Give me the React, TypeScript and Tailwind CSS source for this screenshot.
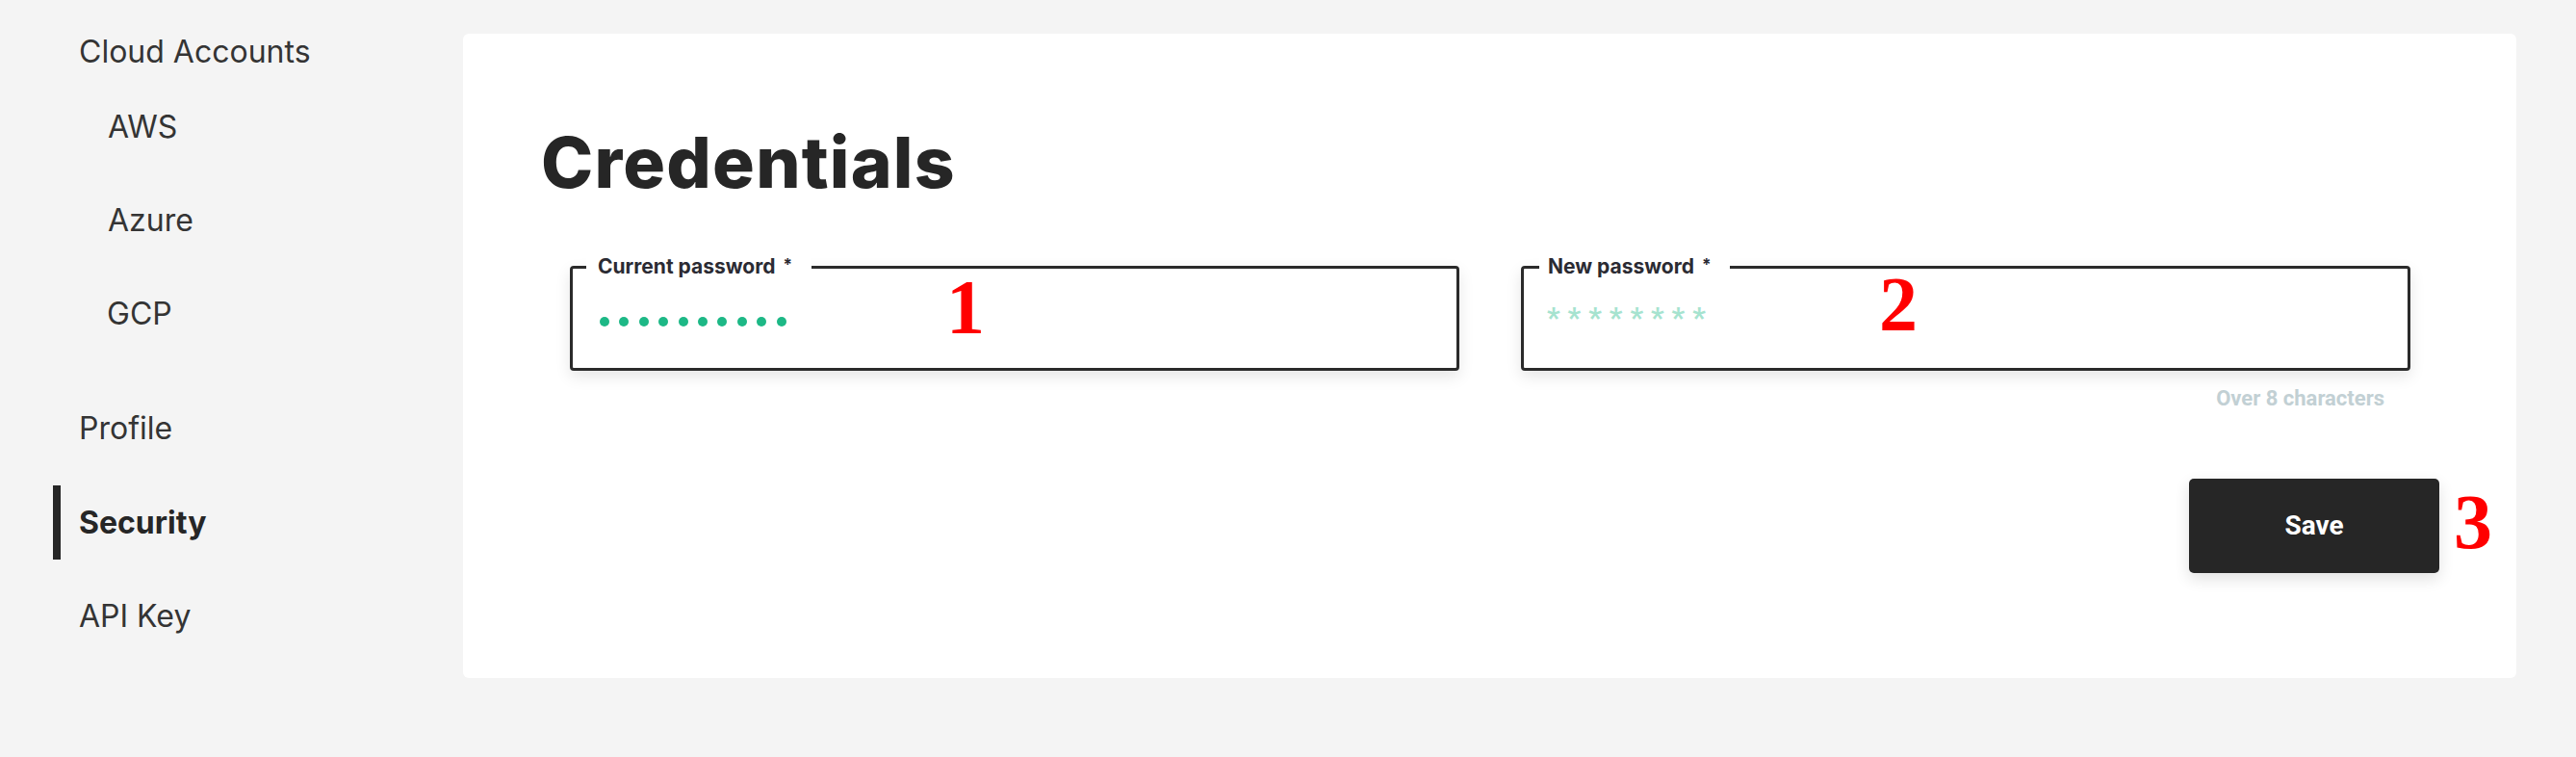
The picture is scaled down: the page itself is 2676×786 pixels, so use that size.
import React from "react";

const Dot = () => <span className="block w-[10px] h-[10px] rounded-full bg-[#1db886]" />;

export default function App() {
  const dots = Array.from({ length: 10 });
  const stars = Array.from({ length: 8 });
  return (
    <div className="relative w-full h-[786px] bg-[#f4f4f4] flex overflow-hidden font-['Inter',sans-serif]">
      <aside className="w-[481px] shrink-0 pt-[24px] text-[32px] leading-none text-[#343434]">
        <div className="h-[59px] flex items-center pl-[82px]">Cloud Accounts</div>
        <div className="h-[97px] flex items-center pl-[112px]">AWS</div>
        <div className="h-[97px] flex items-center pl-[112px]">Azure</div>
        <div className="h-[98px] flex items-center pl-[111px]">GCP</div>
        <div className="mt-[21px] h-[98px] flex items-center pl-[82px]">Profile</div>
        <div className="h-[97px] flex items-center pl-[55px]">
          <span className="block w-[8px] h-[77px] bg-[#262626]" />
          <span className="ml-[19px] font-bold text-[#262626]">Security</span>
        </div>
        <div className="h-[98px] flex items-center pl-[82px]">API Key</div>
      </aside>

      <main className="mt-[35px] mr-[62px] flex-1 h-[669px] bg-white rounded-[6px] pt-[97px] pl-[81px] pr-[80px]">
        <h1 className="text-[73px] leading-none font-extrabold tracking-[1.2px] text-[#262626]">Credentials</h1>

        <div className="mt-[71px] px-[30px] grid grid-cols-2 gap-x-[64px]">
          <div>
            <div className="relative h-[109px] border-[3px] border-[#2b2b2b] rounded-[4px] bg-white shadow-[0_6px_16px_rgba(0,0,0,0.10)]">
              <span className="absolute left-[14px] -top-[12px] bg-white pl-[12px] pr-[20px] text-[21px] leading-[20px] font-bold text-[#2b2b33] whitespace-nowrap">
                Current password<span className="relative -top-[3px] ml-[8px] text-[17px]">*</span>
              </span>
              <div className="flex gap-[10.4px] pl-[28px] pt-[50px]">
                {dots.map((_, i) => (
                  <Dot key={i} />
                ))}
              </div>
            </div>
          </div>
          <div>
            <div className="relative h-[109px] border-[3px] border-[#2b2b2b] rounded-[4px] bg-white shadow-[0_6px_16px_rgba(0,0,0,0.10)]">
              <span className="absolute left-[16px] -top-[12px] bg-white pl-[9px] pr-[20px] text-[21px] leading-[20px] font-bold text-[#2b2b33] whitespace-nowrap">
                New password<span className="relative -top-[3px] ml-[8px] text-[17px]">*</span>
              </span>
              <div className="flex pl-[24px] pt-[36px] font-['Roboto',sans-serif] font-bold text-[30px] leading-none text-[#a6e3cf]">
                {stars.map((_, i) => (
                  <span key={i} className="w-[21.6px]">*</span>
                ))}
              </div>
            </div>
            <div className="mt-[19px] pr-[27px] text-right font-['Roboto',sans-serif] text-[22px] leading-[20px] font-bold text-[#c2d0d4]">
              Over 8 characters
            </div>
          </div>
        </div>

        <div className="mt-[73px] flex justify-end">
          <button className="w-[260px] h-[98px] bg-[#262626] rounded-[5px] text-white text-[28px] font-bold font-['Roboto',sans-serif] shadow-[0_6px_16px_rgba(0,0,0,0.12)]">
            Save
          </button>
        </div>
      </main>

      <span className="absolute left-[983px] top-[279px] font-['Liberation_Serif',serif] font-bold text-[80px] leading-none text-[#ff0000]">1</span>
      <span className="absolute left-[1952px] top-[276px] font-['Liberation_Serif',serif] font-bold text-[80px] leading-none text-[#ff0000]">2</span>
      <span className="absolute left-[2549px] top-[502px] font-['Liberation_Serif',serif] font-bold text-[80px] leading-none text-[#ff0000]">3</span>
    </div>
  );
}
